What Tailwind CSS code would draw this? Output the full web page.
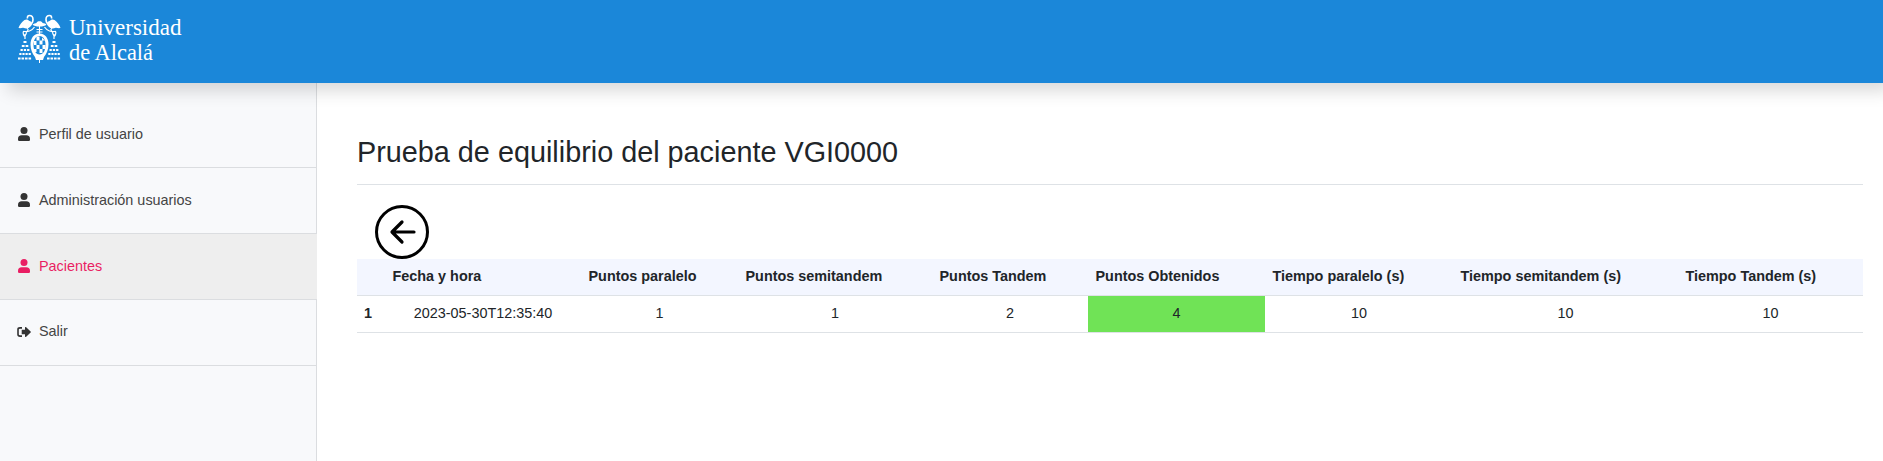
<!DOCTYPE html>
<html lang="es">
<head>
<meta charset="utf-8">
<title>Universidad de Alcalá</title>
<script src="https://cdn.jsdelivr.net/npm/@tailwindcss/browser@4"></script>
</head>
<body class="h-screen overflow-hidden bg-white font-['Liberation_Sans',Arial,sans-serif] text-[#212529] flex flex-col">
<header class="relative z-10 h-[83px] shrink-0 bg-[#1b87d9] shadow-[8px_8px_16px_rgba(0,0,0,0.15)]">
  <svg width="200" height="83" viewBox="0 0 200 83" fill="none">
    <g fill="#fff">
      <path d="M18.500 28c1-3 3-6 6-8 2-1 3.500-.5 5 1 2.500.5 3 3 1.500 5-2 2.500-5 3-7 2-2-.5-3 .5-5.500 0z"/>
      <path d="M60.500 28c-1-3-3-6-6-8-2-1-3.500-.5-5 1-2.500.5-3 3-1.500 5 2 2.500 5 3 7 2 2-.5 3 .5 5.500 0z"/>
      <path d="M32.500 24.500q2-1.500 4-1.500c0-2.300 6-2.300 6 0q3 0 4 1.500-2 2-7 2t-7-2z"/>
      <path fill-rule="evenodd" d="M39.500 33.500c6 0 9 5 9 11 0 5-2 9.500-4.500 12.500l-1 3h-7l-1-3c-2.500-3-4.500-7.500-4.500-12.500 0-6 3-11 9-11zm0 2.500c-4 0-6 4-6 9s2 9.500 6 9.500 6-4.500 6-9.500-2-9-6-9z"/>
      <path d="M36.500 36.500h3v4h-3zM42 37.500l3 3h-3zM39.500 40.500h3v4h-3zM34 41h2.500v4H34zM36.500 45h3v4h-3zM42.500 45h3v4h-3zM39.500 49h3v4h-3zM34 49h2.500v3H34zM39 59h1v4h-1z"/>
    </g>
    <g stroke="#fff" stroke-width="1.600">
      <path d="M27.500 18.500q-.5-3 2-3 3.500 0 3.500 4c0 2-1 4-2.500 5M51.500 18.500q.5-3-2-3-3.500 0-3.500 4c0 2 1 4 2.500 5"/>
      <path d="M39.500 26v8M36.500 29.500h6M36.500 32h6" stroke-width="1.100"/>
      <path d="M34.500 27q-2 3-5 4t-5 .5-1 3 2.500-.5 2-4-1-2M44.500 27q2 3 5 4t5 .5 1 3-2.500-.5-2-4 1-2M25 34v5M54 34v5" stroke-width="1.200"/>
    </g>
    <g stroke="#fff" stroke-width="2">
      <path d="M23.500 42h3" stroke-dasharray="3 1"/><path d="M21.800 46h6.500" stroke-dasharray="2.800 1"/>
      <path d="M20.500 50h9" stroke-dasharray="2.300 1"/><path d="M19.300 54h11.500" stroke-dasharray="2.200 .9"/>
      <path d="M18 58.500h13.500" stroke-dasharray="2.600 .9"/>
      <path d="M52.500 42h3" stroke-dasharray="3 1"/><path d="M50.800 46h6.500" stroke-dasharray="2.800 1"/>
      <path d="M49.500 50h9" stroke-dasharray="2.300 1"/><path d="M48.300 54h11.500" stroke-dasharray="2.200 .9"/>
      <path d="M47 58.500h13.500" stroke-dasharray="2.600 .9"/>
    </g>
    <g fill="#fff" font-family="Liberation Serif, serif" font-size="24">
      <text x="69" y="34.500" textLength="112.500" lengthAdjust="spacingAndGlyphs">Universidad</text>
      <text x="69" y="60" textLength="84" lengthAdjust="spacingAndGlyphs">de Alcalá</text>
    </g>
  </svg>
</header>
<div class="flex flex-1 min-h-0">
  <nav class="w-[317px] shrink-0 bg-[#f8f9fb] text-[14.4px] text-[#333]">
    <a class="flex items-center h-[85px] pl-[18px] pt-[19px] border-b border-r border-[#dbdde0]">
      <svg class="w-3 h-[14px] mr-[9px] mb-px" viewBox="0 0 12 14" fill="currentColor"><circle cx="6" cy="3.500" r="3.500"/><path d="M0 12.800V12a3.700 3.700 0 0 1 3.700-3.700h4.600A3.700 3.700 0 0 1 12 12v.8q0 1.200-1.200 1.200H1.200Q0 14 0 12.800z"/></svg>
      <span class="text-[#444]">Perfil de usuario</span></a>
    <a class="flex items-center h-[66px] pl-[18px] border-b border-r border-[#dbdde0]">
      <svg class="w-3 h-[14px] mr-[9px] mb-px" viewBox="0 0 12 14" fill="currentColor"><circle cx="6" cy="3.500" r="3.500"/><path d="M0 12.800V12a3.700 3.700 0 0 1 3.700-3.700h4.600A3.700 3.700 0 0 1 12 12v.8q0 1.200-1.200 1.200H1.200Q0 14 0 12.800z"/></svg>
      <span class="text-[#444]">Administración usuarios</span></a>
    <a class="flex items-center h-[66px] pl-[18px] border-b border-[#dbdde0] bg-[#eee] text-[#e91e63]">
      <svg class="w-3 h-[14px] mr-[9px] mb-px" viewBox="0 0 12 14" fill="currentColor"><circle cx="6" cy="3.500" r="3.500"/><path d="M0 12.800V12a3.700 3.700 0 0 1 3.700-3.700h4.600A3.700 3.700 0 0 1 12 12v.8q0 1.200-1.200 1.200H1.200Q0 14 0 12.800z"/></svg>
      <span>Pacientes</span></a>
    <a class="flex items-center h-[66px] pl-[17px] pb-[2px] border-b border-r border-[#dbdde0]">
      <svg class="w-[14px] h-3 mr-2" viewBox="0 0 14 12" fill="none"><path d="M5 1.900H3Q1 1.900 1 3.500v5q0 1.600 2 1.600h2" stroke="currentColor" stroke-width="1.600"/><path d="M8 1.300q.5-.6 1.200 0L13.600 5.400q.6.600 0 1.200L9.200 10.700q-1.200.6-1.200-.5V8.300H4.700V3.700H8z" fill="currentColor"/></svg>
      <span class="text-[#444]">Salir</span></a>
    <div class="h-24 border-r border-[#dbdde0]"></div>
  </nav>
  <main class="flex-1 pl-10 pr-5 pt-[51px]">
    <h1 class="h-[51px] border-b border-[#dee2e6] text-[28.8px] leading-[36px]">Prueba de equilibrio del paciente VGI0000</h1>
    <div class="h-[74px] pt-5 pl-[18px]">
      <svg width="54" height="54" viewBox="0 0 54 54" fill="none" stroke="#000" stroke-width="3"><circle cx="27" cy="27" r="25.500"/><path d="M39 27H17.500M27 17L17 27 27 37" stroke-width="3.200" stroke-linecap="round" stroke-linejoin="round"/></svg>
    </div>
    <table class="w-[1506px] table-fixed border-separate border-spacing-0 text-[14.4px] leading-5">
      <colgroup><col class="w-[28px]"><col class="w-[196px]"><col class="w-[157px]"><col class="w-[194px]"><col class="w-[156px]"><col class="w-[177px]"><col class="w-[188px]"><col class="w-[225px]"><col class="w-[185px]"></colgroup>
      <thead><tr class="h-[37px] bg-[#f3f6ff] text-left *:px-[7.5px] *:pt-0 *:pb-[2px] *:border-b *:border-[#dee2e6] *:whitespace-nowrap">
        <th></th><th>Fecha y hora</th><th>Puntos paralelo</th><th>Puntos semitandem</th><th>Puntos Tandem</th><th>Puntos Obtenidos</th><th>Tiempo paralelo (s)</th><th>Tiempo semitandem (s)</th><th>Tiempo Tandem (s)</th></tr></thead>
      <tbody><tr class="h-[37px] text-center *:pb-[2px] *:border-b *:border-[#dee2e6]">
        <th class="pl-[7px] text-left">1</th><td>2023-05-30T12:35:40</td><td>1</td><td>1</td><td>2</td><td class="bg-[#70e356]">4</td><td>10</td><td>10</td><td>10</td></tr></tbody>
    </table>
  </main>
</div>
</body>
</html>
